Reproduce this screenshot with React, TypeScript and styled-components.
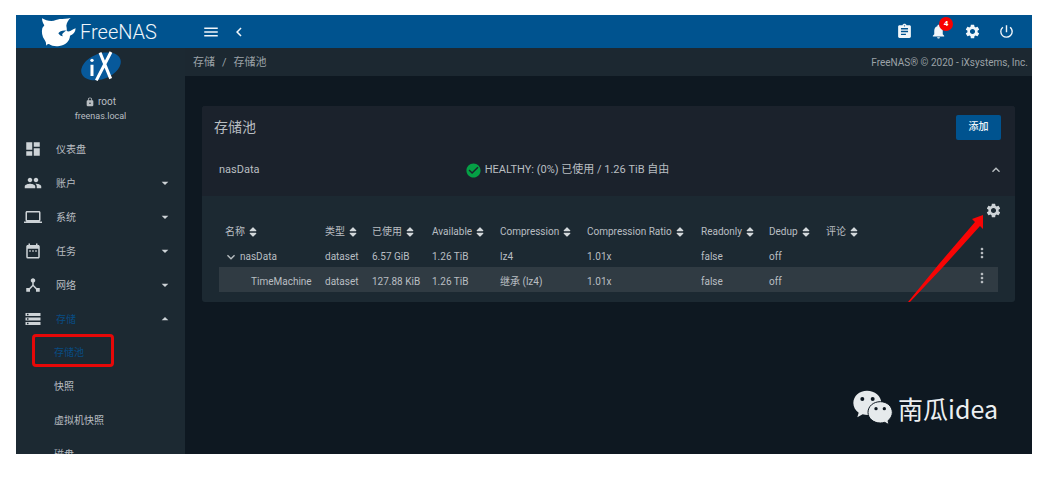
import React from "react";
import styled, { createGlobalStyle } from "styled-components";
import {
  MdArrowDropDown, MdArrowDropUp, MdAssignment, MdCheckCircle, MdChevronLeft, MdDashboard, MdDateRange,
  MdDeviceHub, MdExpandLess, MdExpandMore, MdLaptop, MdLock, MdMenu, MdMoreVert, MdNotifications,
  MdPeople, MdPowerSettingsNew, MdSettings, MdStorage,
} from "react-icons/md";
import { FaSort } from "react-icons/fa";

const Global = createGlobalStyle`
  *, *::before, *::after { box-sizing: border-box; }
  body { margin: 0; background: #fff; font-family: Roboto, "Noto Sans CJK SC", sans-serif; font-size: 10px; line-height: 16px; color: #b9bec2; }
  button { font: inherit; color: inherit; background: none; border: 0; padding: 0; cursor: pointer; }
  a { color: inherit; text-decoration: none; }
  ul { list-style: none; margin: 0; padding: 0; }
  h1 { margin: 0; }
  svg { display: block; flex: none; }
`;

const Page = styled.div`
  height: 100vh;
  padding: 15px 24px 24px 16px;
`;
const Shell = styled.div`
  position: relative;
  height: 100%;
  display: flex;
  flex-direction: column;
  overflow: hidden;
  background: #0e1821;
`;
const Header = styled.header`
  flex: none;
  display: flex;
  align-items: center;
  height: 33px;
  background: #00538f;
  color: #f1f6fa;
`;
const Brand = styled.a`
  flex: none;
  width: 169px;
  display: flex;
  align-items: center;
  gap: 4px;
  padding-left: 25px;
  font-size: 20px;
  font-weight: 300;
`;
const HeaderTools = styled.div`
  flex: 1;
  display: flex;
  align-items: center;
  gap: 10px;
  padding-left: 17px;
`;
const HeaderActions = styled.div`
  display: flex;
  gap: 16px;
  padding-right: 17px;
`;
const IconButton = styled.button`
  position: relative;
  display: grid;
  place-items: center;
  width: 18px;
  height: 18px;
`;
const Badge = styled.span`
  position: absolute;
  top: -6px;
  right: -6px;
  width: 14px;
  height: 14px;
  border-radius: 7px;
  background: #f80000;
  color: #fff;
  font-size: 8px;
  font-weight: 700;
  line-height: 14px;
  text-align: center;
`;
const Columns = styled.div`
  flex: 1;
  min-height: 0;
  display: flex;
`;
const Sidebar = styled.aside`
  flex: none;
  width: 169px;
  overflow: hidden;
  background: #1c2932;
`;
const Profile = styled.div`
  height: 84px;
  display: flex;
  flex-direction: column;
  align-items: center;
  padding-top: 3px;
  line-height: 14px;
`;
const User = styled.span`
  display: flex;
  align-items: center;
  gap: 3px;
  margin-top: 14px;
`;
const Host = styled.span`
  font-size: 9px;
`;
const NavItem = styled.a<{ $active?: boolean }>`
  position: relative;
  display: flex;
  align-items: center;
  height: 34px;
  padding: 0 12px 0 8px;
  color: ${(p) => (p.$active ? "#084c82" : "#b9bec2")};
  svg { color: #cdd3d7; }
`;
const NavLabel = styled.span`
  flex: 1;
  padding: 2px 0 0 14px;
`;
const SubItem = styled(NavItem)`
  padding-left: 38px;
`;
const Highlight = styled.span`
  position: absolute;
  left: 16px;
  top: -2px;
  width: 82px;
  height: 33px;
  border: 3px solid #e60808;
  border-radius: 4px;
`;
const Content = styled.div`
  flex: 1;
  min-width: 0;
`;
const CrumbBar = styled.div`
  display: flex;
  justify-content: space-between;
  align-items: center;
  height: 28px;
  padding: 1px 4px 0 8px;
  background: #1c2831;
  color: #9ba2a7;
`;
const Crumbs = styled.nav`
  display: flex;
  gap: 7px;
  font-size: 11px;
`;
const Main = styled.main`
  padding: 30px 17px 0;
`;
const Card = styled.section`
  border-radius: 3px;
  overflow: hidden;
  background: #1c2932;
`;
const CardHead = styled.div`
  display: flex;
  align-items: center;
  justify-content: space-between;
  height: 42px;
  padding: 0 14px 0 12px;
  background: #1b222c;
`;
const Title = styled.h1`
  font-size: 14px;
  font-weight: 400;
`;
const AddButton = styled.button`
  width: 45px;
  height: 25px;
  border-radius: 2px;
  background: #00538f;
  color: #f1f6fa;
  font-weight: 500;
`;
const PoolRow = styled.div`
  display: grid;
  grid-template-columns: 32fr 68fr 16px;
  align-items: center;
  height: 48px;
  padding: 0 12px 4px 17px;
  background: #1b222c;
  font-size: 11px;
`;
const Status = styled.span`
  display: flex;
  align-items: center;
  gap: 3px;
`;
const CardBody = styled.div`
  padding: 5px 17px 10px;
`;
const Toolbar = styled.div`
  display: flex;
  justify-content: flex-end;
  margin: 0 -4px 3px 0;
`;
const Arrow = styled.svg`
  position: absolute;
  right: 17px;
  top: 13px;
  pointer-events: none;
`;
const Table = styled.table`
  width: 100%;
  table-layout: fixed;
  border-collapse: collapse;
  text-align: left;
  white-space: nowrap;
  th { height: 20px; padding: 0; font-weight: 400; }
  td { height: 25px; padding: 5px 0 0; }
  th:first-child { padding-left: 6px; }
`;
const Col = styled.col<{ $w?: number }>`
  width: ${(p) => (p.$w ? `${p.$w}px` : "auto")};
`;
const Row = styled.tr<{ $shaded?: boolean }>`
  background: ${(p) => (p.$shaded ? "#303b43" : "transparent")};
`;
const Sort = styled.button`
  display: flex;
  align-items: center;
  gap: 2px;
  svg { color: #d3d8db; }
`;
const Name = styled.span<{ $child?: boolean }>`
  display: flex;
  align-items: center;
  gap: 1px;
  padding-left: ${(p) => (p.$child ? 32 : 4)}px;
`;
const RowMenu = styled(IconButton)`
  width: 32px;
  height: 16px;
  margin-top: -8px;
`;
const Watermark = styled.div`
  position: absolute;
  right: 34px;
  bottom: 28px;
  display: flex;
  align-items: center;
  gap: 5px;
  color: #eceff1;
  font-family: "Noto Sans CJK SC", sans-serif;
  font-size: 25px;
  line-height: 36px;
`;

const SharkLogo = () => (
  <svg width="35" height="30" viewBox="0 0 105 90" fill="#fff" aria-hidden="true">
    <path d="M3 4c8 5 18 8 28 8 10-1 18-4 25-6 10 0 22-1 33-3-7 6-12 14-13 23 1 6 2 11 1 16 10 5 17-5 27-8-1 12-7 19-17 22-1 16-12 28-32 31-11 2-23 0-31-6-4-1-6 2-9 5 1-6 0-11-4-17C3 58 1 45 4 33c2-3 5-6 6-8C6 19 3 12 3 4z" />
    <path d="M76 41c-9-2-21 1-24 8 4 6 8 9 14 9-2-3-3-5-2-7 3-4 7-8 12-10z" fill="#00538f" />
  </svg>
);
const IxLogo = () => (
  <svg width="42" height="30" viewBox="0 0 126 90" aria-hidden="true">
    <ellipse cx="63" cy="46" rx="62" ry="38" transform="rotate(-21 63 46)" fill="#07599b" />
    <path d="M36 41v34M60 5l32 78M93 3L49 88" stroke="#fff" strokeWidth="9" fill="none" />
    <circle cx="36" cy="28" r="5" fill="#fff" />
  </svg>
);
const WeChat = () => (
  <svg width="40" height="36" viewBox="0 0 120 108" aria-hidden="true">
    <path d="M42 2C19 2 1 18 1 39c0 12 6 22 16 29l-4 14 16-9c30 7 56-8 56-34C85 18 65 2 42 2z" fill="#e6eaec" />
    <path d="M82 35c-21 0-37 14-37 32s16 32 37 32c5 0 9-1 13-2l13 7-3-12c8-6 13-15 13-25 0-18-16-32-36-32z" fill="#e6eaec" stroke="#0e1821" strokeWidth="3" />
    <g fill="#0e1821">
      <circle cx="28" cy="27" r="6" /><circle cx="59" cy="27" r="6" />
      <circle cx="69" cy="56" r="5" /><circle cx="94" cy="56" r="5" />
    </g>
  </svg>
);

const sections = [
  { label: "仪表盘", Icon: MdDashboard },
  { label: "账户", Icon: MdPeople, group: true },
  { label: "系统", Icon: MdLaptop, group: true },
  { label: "任务", Icon: MdDateRange, group: true },
  { label: "网络", Icon: MdDeviceHub, group: true },
  { label: "存储", Icon: MdStorage, group: true, open: true },
];
const storagePages = ["存储池", "快照", "虚拟机快照", "磁盘"];
const columns = [
  { label: "名称", w: 106 }, { label: "类型", w: 47 }, { label: "已使用", w: 60 },
  { label: "Available", w: 68 }, { label: "Compression", w: 87 }, { label: "Compression Ratio", w: 114 },
  { label: "Readonly", w: 68 }, { label: "Dedup", w: 57 }, { label: "评论" },
];
const datasets = [
  ["nasData", "dataset", "6.57 GiB", "1.26 TiB", "lz4", "1.01x", "false", "off", ""],
  ["TimeMachine", "dataset", "127.88 KiB", "1.26 TiB", "继承 (lz4)", "1.01x", "false", "off", ""],
];

export default function App() {
  return (
    <Page>
      <Global />
      <Shell>
        <Header>
          <Brand href="#"><SharkLogo />FreeNAS</Brand>
          <HeaderTools>
            <IconButton aria-label="Menu"><MdMenu size={18} /></IconButton>
            <IconButton aria-label="Collapse"><MdChevronLeft size={18} /></IconButton>
          </HeaderTools>
          <HeaderActions>
            <IconButton aria-label="Tasks"><MdAssignment size={17} /></IconButton>
            <IconButton aria-label="Alerts"><MdNotifications size={17} /><Badge>4</Badge></IconButton>
            <IconButton aria-label="Settings"><MdSettings size={17} /></IconButton>
            <IconButton aria-label="Power"><MdPowerSettingsNew size={17} /></IconButton>
          </HeaderActions>
        </Header>
        <Columns>
          <Sidebar>
            <Profile>
              <IxLogo />
              <User><MdLock size={10} />root</User>
              <Host>freenas.local</Host>
            </Profile>
            <ul>
              {sections.map(({ label, Icon, group, open }) => (
                <li key={label}>
                  <NavItem href="#" $active={open}>
                    <Icon size={18} />
                    <NavLabel>{label}</NavLabel>
                    {group && (open ? <MdArrowDropUp size={16} /> : <MdArrowDropDown size={16} />)}
                  </NavItem>
                </li>
              ))}
              {storagePages.map((label, i) => (
                <li key={label}>
                  <SubItem href="#" $active={i === 0}>{label}{i === 0 && <Highlight />}</SubItem>
                </li>
              ))}
            </ul>
          </Sidebar>
          <Content>
            <CrumbBar>
              <Crumbs><a href="#">存储</a><span>/</span><a href="#">存储池</a></Crumbs>
              <span>FreeNAS® © 2020 - iXsystems, Inc.</span>
            </CrumbBar>
            <Main>
              <Card>
                <CardHead><Title>存储池</Title><AddButton>添加</AddButton></CardHead>
                <PoolRow>
                  <span>nasData</span>
                  <Status><MdCheckCircle size={17} color="#05a045" />HEALTHY: (0%) 已使用 / 1.26 TiB 自由</Status>
                  <IconButton aria-label="Collapse pool"><MdExpandLess size={16} /></IconButton>
                </PoolRow>
                <CardBody>
                  <Toolbar>
                    <IconButton aria-label="Pool settings">
                      <MdSettings size={17} color="#cdd3d7" />
                      <Arrow width="78" height="92" viewBox="0 0 78 92" aria-hidden="true">
                        <path d="M76 1L65 5l3 3L32 50 1 88l1 1 34-36 37-41 3 3z" fill="#f80505" />
                      </Arrow>
                    </IconButton>
                  </Toolbar>
                  <Table>
                    <colgroup>{columns.map((c) => <Col key={c.label} $w={c.w} />)}<Col $w={32} /></colgroup>
                    <thead>
                      <tr>
                        {columns.map((c) => <th key={c.label}><Sort>{c.label}<FaSort size={12} /></Sort></th>)}
                        <th aria-label="Actions" />
                      </tr>
                    </thead>
                    <tbody>
                      {datasets.map((d, r) => (
                        <Row key={d[0]} $shaded={r === 1}>
                          {d.map((v, c) => (
                            <td key={c}>
                              {c === 0 ? <Name $child={r === 1}>{r === 0 && <MdExpandMore size={16} />}{v}</Name> : v}
                            </td>
                          ))}
                          <td><RowMenu aria-label="Row actions"><MdMoreVert size={16} /></RowMenu></td>
                        </Row>
                      ))}
                    </tbody>
                  </Table>
                </CardBody>
              </Card>
            </Main>
          </Content>
        </Columns>
        <Watermark><WeChat />南瓜idea</Watermark>
      </Shell>
    </Page>
  );
}
